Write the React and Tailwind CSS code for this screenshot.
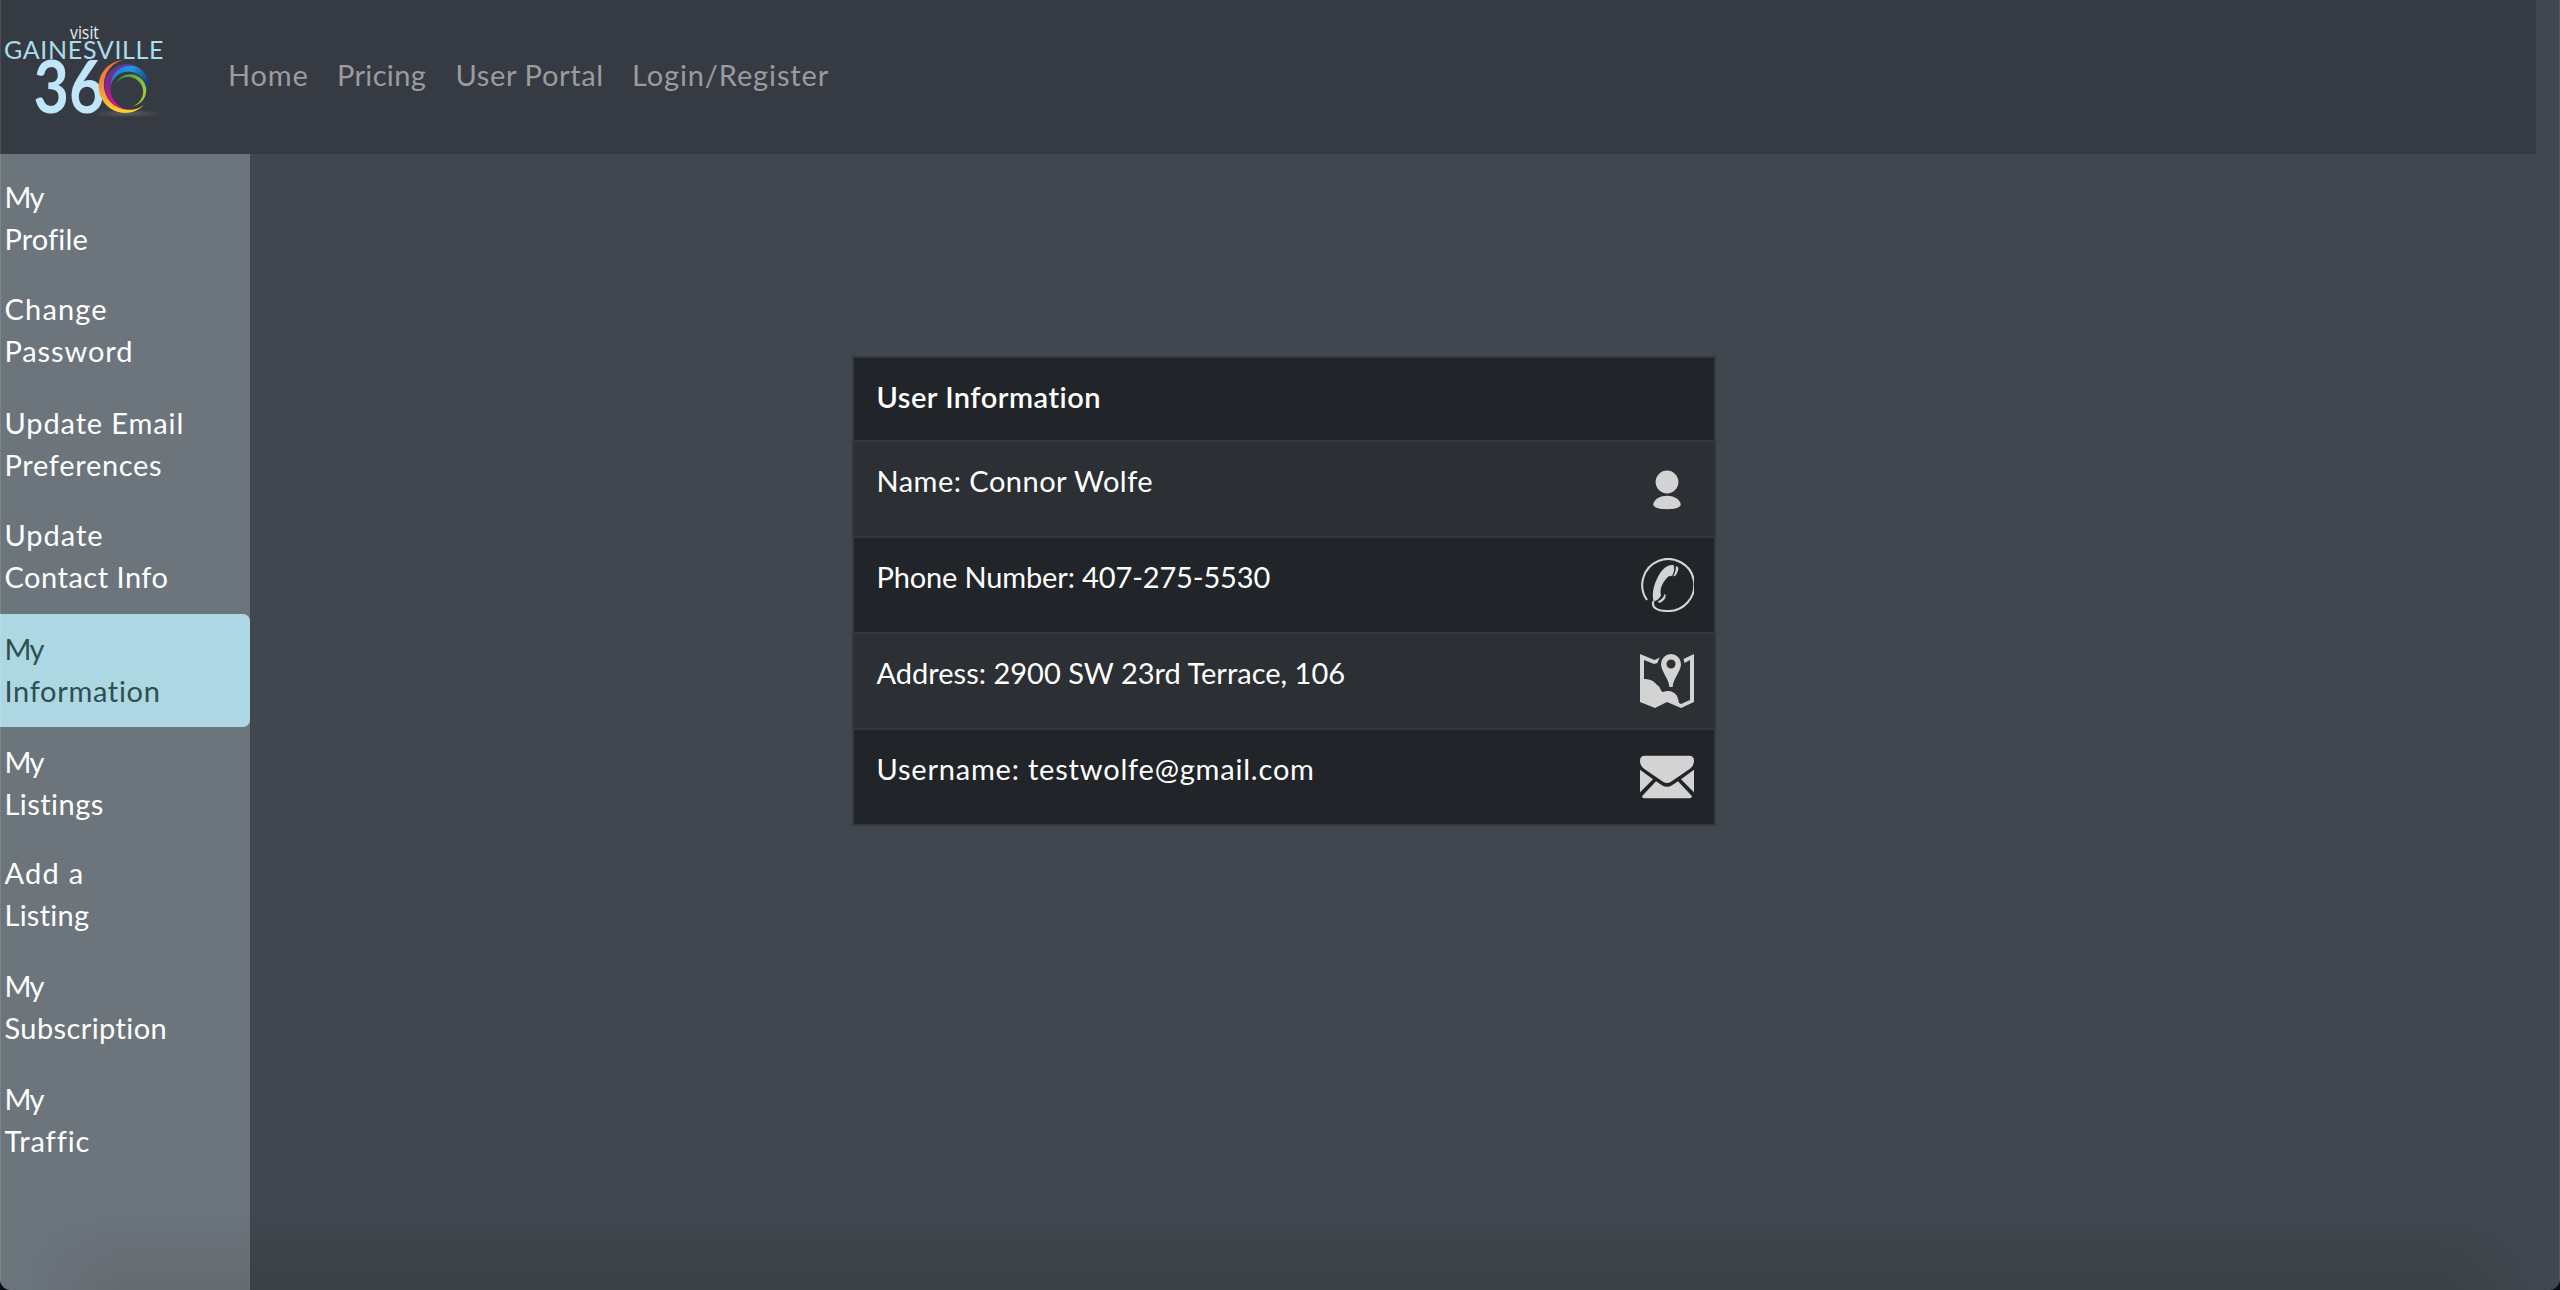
const navLinks = [
  { label: 'Home', cls: 'w-[109px] tracking-[0.86px]' },
  { label: 'Pricing', cls: 'w-[118.5px] tracking-[0.34px]' },
  { label: 'User Portal', cls: 'w-[176.5px] tracking-[0.65px]' },
  { label: 'Login/Register', cls: 'tracking-[0.88px]' },
];

const menu = [
  { height: 'h-[112px]', lines: [['My', 'tracking-[-1.5px]'], ['Profile', 'tracking-[0.12px]']] },
  { height: 'h-[114px]', lines: [['Change', 'tracking-[1.17px]'], ['Password', 'tracking-[0.88px]']] },
  { height: 'h-[112px]', lines: [['Update Email', 'tracking-[0.88px]'], ['Preferences', 'tracking-[0.7px]']] },
  { height: 'h-[114px]', lines: [['Update', 'tracking-[0.95px]'], ['Contact Info', 'tracking-[0.5px]']] },
  { height: 'h-[113px]', active: true, lines: [['My', 'tracking-[-1.5px]'], ['Information', 'tracking-[0.68px]']] },
  { height: 'h-[111px]', lines: [['My', 'tracking-[-1.5px]'], ['Listings', 'tracking-[0.45px]']] },
  { height: 'h-[113px]', lines: [['Add a', 'tracking-[1.28px]'], ['Listing', 'tracking-[0.25px]']] },
  { height: 'h-[113px]', lines: [['My', 'tracking-[-1.5px]'], ['Subscription', 'tracking-[0.4px]']] },
  { height: 'h-[112px]', lines: [['My', 'tracking-[-1.5px]'], ['Traffic', 'tracking-[0.88px]']] },
];

function UserIcon() {
  return (
    <svg viewBox="0 0 54 54" className="size-[54px] fill-[#d3d3d3]">
      <circle cx="27" cy="20" r="11.4" />
      <path d="M27 33.7c8 0 13.7 4.6 13.7 8.8 0 3-5.5 4.7-13.7 4.7s-13.7-1.7-13.7-4.7c0-4.2 5.7-8.8 13.7-8.8z" />
    </svg>
  );
}

function PhoneIcon() {
  return (
    <svg viewBox="0 0 54 54" className="size-[54px] fill-[#d3d3d3]">
      <path
        d="M7 42A26 26 0 1 1 27 53C18 53 11 50 13.5 43"
        fill="none"
        stroke="#d3d3d3"
        strokeWidth="2.1"
      />
      <path d="M33.5 7C25 6.5 20 14 16 23C13 30 12 37 13.5 43C16 43.5 19 41 21 37.5C19 30 24 22 29 18C31 18.5 32.5 18 32.5 17C34.5 13 34.5 10 33.5 7Z" />
      <path d="M35.8 8.2C39 8.5 38.8 11 37.5 14C36.3 17 35.2 18.5 33.2 18.2C35.5 14.5 36 11.5 35.8 8.2Z" />
      <path d="M24.8 35.8C27 38.5 24.5 42 22 43.8C20 45.2 18.3 45 17.8 43.5C21.5 41.8 23.8 39 24.8 35.8Z" />
    </svg>
  );
}

function MapIcon() {
  return (
    <svg viewBox="0 0 54 54" className="size-[54px] fill-[#d3d3d3]">
      <path d="M0 0L14.5 6L20 3.5Q18 6 17.5 9L14 10L4 6V25C10 25 14 27 17 31C21 33 20 37 23 38C27 36 34 36.5 37 42Q38.5 45 39 49L41 50L50 46V6L44.5 9L43.5 5L54 0V48L41 54L27 48L15 54L0 48Z" />
      <path
        fillRule="evenodd"
        d="M21 10a10 10 0 0 1 20 0C41 17 33 25 32.6 33h-3.2C29 25 21 17 21 10ZM31 5.5a4.5 4.5 0 1 0 0 9a4.5 4.5 0 1 0 0-9Z"
      />
    </svg>
  );
}

function MailIcon() {
  return (
    <svg viewBox="0 0 54 54" className="size-[54px] fill-[#d3d3d3]">
      <g transform="translate(0 5.7)">
        <path d="M5 0H49Q54 0 54 5Q54 10 50 13L31 26Q27 28.5 23 26L4 13Q0 10 0 5Q0 0 5 0Z" />
        <path d="M0 14L13 23.5L0 36.5ZM54 14L41 23.5L54 36.5Z" />
        <path d="M16 25.5L22 29.5Q27 32.5 32 29.5L38 25.5L52 40.5Q52 42.6 49.5 42.6H4.5Q2 42.6 2 40.5Z" />
      </g>
    </svg>
  );
}

const rows = [
  { text: 'Name: Connor Wolfe', cls: 'tracking-[0.48px]', bg: 'bg-[#2c3034]', Icon: UserIcon },
  { text: 'Phone Number: 407-275-5530', cls: 'tracking-[-0.14px]', bg: 'bg-[#212529]', Icon: PhoneIcon },
  { text: 'Address: 2900 SW 23rd Terrace, 106', cls: 'tracking-[0.01px]', bg: 'bg-[#2c3034]', Icon: MapIcon },
  { text: 'Username: testwolfe@gmail.com', cls: 'tracking-[0.8px]', bg: 'bg-[#212529]', Icon: MailIcon },
];

function Logo() {
  return (
    <svg viewBox="0 0 228 154" className="h-[154px] w-[228px] shrink-0 font-['Lato',sans-serif]">
      <defs>
        <linearGradient id="warm" x1="0" y1="0" x2="0" y2="1">
          <stop offset="0" stopColor="#f26a3a" />
          <stop offset="0.5" stopColor="#f58a3c" />
          <stop offset="1" stopColor="#ffd42a" />
        </linearGradient>
        <linearGradient id="violet" x1="0" y1="0" x2="0" y2="1">
          <stop offset="0" stopColor="#5b3aa0" />
          <stop offset="0.45" stopColor="#83278e" />
          <stop offset="1" stopColor="#e0148c" />
        </linearGradient>
        <linearGradient id="azure" x1="0" y1="0" x2="1" y2="0.5">
          <stop offset="0" stopColor="#1b75bc" />
          <stop offset="0.5" stopColor="#1b9be0" />
          <stop offset="1" stopColor="#1a3f80" />
        </linearGradient>
        <linearGradient id="leaf" x1="0" y1="0" x2="1" y2="0.6">
          <stop offset="0" stopColor="#2f8f4e" />
          <stop offset="1" stopColor="#a6ce39" />
        </linearGradient>
        <radialGradient id="floor">
          <stop offset="0" stopColor="#6a6e70" stopOpacity="0.7" />
          <stop offset="1" stopColor="#6a6e70" stopOpacity="0" />
        </radialGradient>
      </defs>
      <ellipse cx="127" cy="113.5" rx="36" ry="4" fill="url(#floor)" />
      <text x="70" y="38.5" fontSize="18" textLength="29" lengthAdjust="spacingAndGlyphs" fill="#e3edf1" className="font-['Open_Sans',sans-serif]">visit</text>
      <text x="4" y="59.3" fontSize="25" textLength="159.5" fill="#a9dcec">GAINESVILLE</text>
      <text x="33.5" y="112.7" fontSize="72" fontWeight="700" textLength="71" lengthAdjust="spacingAndGlyphs" fill="#bfe6fb">36</text>
      <path d="M123 60A26.5 26.5 0 1 0 144 105A25.3 25.3 0 1 1 123 60Z" fill="url(#warm)" />
      <path d="M142 70A22.5 22.5 0 1 0 125 109A21.35 21.35 0 1 1 142 70Z" fill="url(#violet)" />
      <path d="M111 85A18.8 18.8 0 1 1 146 94A18.07 18.07 0 0 0 111 85Z" fill="url(#azure)" />
      <path d="M116 83A16 16 0 1 1 133 106A15 15 0 1 0 116 83Z" fill="url(#leaf)" />
    </svg>
  );
}

export default function App() {
  return (
    <div className="h-[1290px] w-[2560px] bg-[#0a0d18] font-['Lato','Noto_Sans',sans-serif] text-[29px] leading-[42px]">
      <div className="relative flex h-full flex-col overflow-hidden rounded-b-[11px] bg-[#40474e] text-white">
        <header className="flex h-[154px] w-[2536px] shrink-0 items-center bg-[#363a42]">
          <Logo />
          <nav className="flex pb-[4px] text-[#9a9c9f]">
            {navLinks.map((l) => (
              <a key={l.label} className={l.cls}>{l.label}</a>
            ))}
          </nav>
        </header>

        <div className="flex flex-1">
          <aside className="flex w-[250px] shrink-0 flex-col bg-[#6d757c] pt-[8px]">
            {menu.map(({ height, active, lines }, i) => (
              <a
                key={i}
                className={
                  'flex shrink-0 flex-col rounded-r-[7px] pt-[14px] pl-[4.5px] ' + height +
                  (active ? ' bg-[#add8e3] text-[#2f4f4f]' : '')
                }
              >
                {lines.map(([word, cls]) => (
                  <span key={word} className={cls}>{word}</span>
                ))}
              </a>
            ))}
          </aside>

          <main className="pt-[202px] pl-[602px]">
            <section className="w-[864px] border-2 border-[#32383e]">
              <h2 className="h-[82px] bg-[#212529] pt-[18px] pl-[22.5px] font-semibold tracking-[0.5px]">User Information</h2>
              {rows.map(({ text, cls, bg, Icon }) => (
                <div key={text} className={'flex h-[96px] justify-between border-t-2 border-[#32383e] pr-[20px] pl-[22.5px] ' + bg}>
                  <span className={'pt-[18px] ' + cls}>{text}</span>
                  <span className="pt-[20px]"><Icon /></span>
                </div>
              ))}
            </section>
          </main>
        </div>

        <div className="pointer-events-none absolute inset-x-[20px] bottom-0 h-[80px] bg-linear-to-t from-black/8 to-transparent [mask-image:linear-gradient(to_right,transparent,black_100px,black_calc(100%-100px),transparent)]" />
        <div className="pointer-events-none absolute inset-y-0 left-0 w-px bg-white/10" />
        <div className="pointer-events-none absolute inset-y-0 right-0 w-px bg-white/10" />
      </div>
    </div>
  );
}
